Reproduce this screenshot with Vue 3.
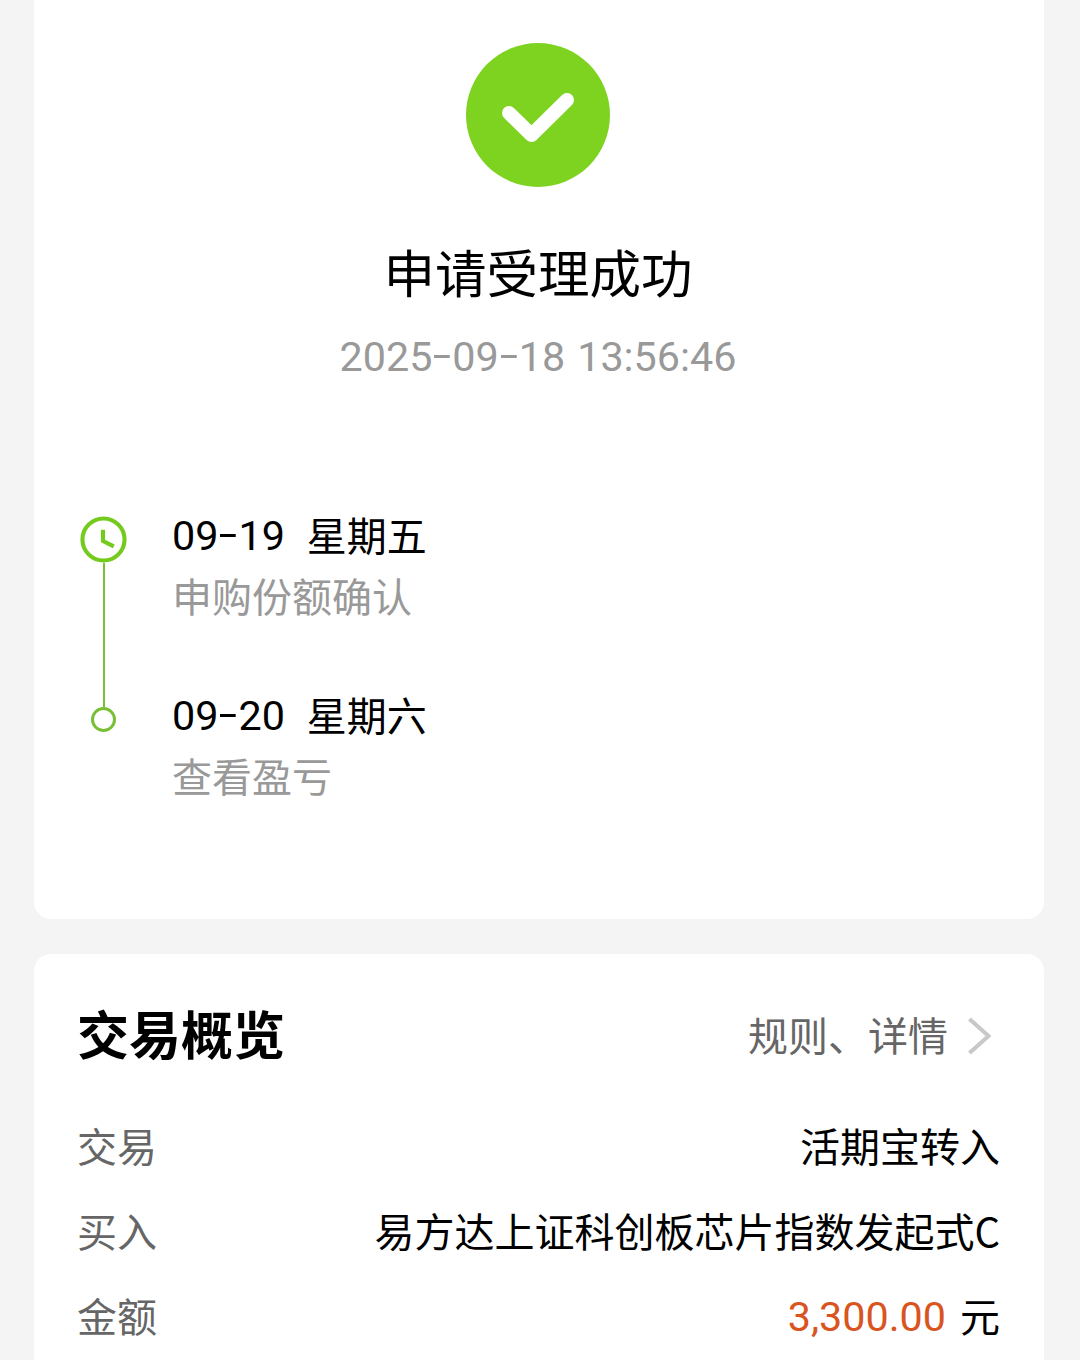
<script setup>
const time = { date: ['2025', '09', '18'], clock: '13:56:46' }

const steps = [
  { date: ['09', '19'], day: '星期五', text: '申购份额确认', active: true },
  { date: ['09', '20'], day: '星期六', text: '查看盈亏', active: false }
]
</script>

<template>
  <div class="page">
    <section class="card result">
      <svg class="success-icon" viewBox="0 0 144 144">
        <circle cx="72" cy="72" r="72" fill="#7ed321" />
        <path d="M43 70 L65.5 92 L101 57" fill="none" stroke="#fff" stroke-width="14" stroke-linecap="round" stroke-linejoin="round" />
      </svg>
      <h1 class="title">申请受理成功</h1>
      <div class="time">
        <span><template v-for="(part, i) in time.date" :key="i"><span v-if="i" class="dash">-</span>{{ part }}</template></span>
        <span>{{ time.clock }}</span>
      </div>
      <ul class="steps">
        <li v-for="step in steps" :key="step.day" class="step">
          <div class="marker">
            <svg v-if="step.active" class="clock" viewBox="0 0 48 48">
              <circle cx="24" cy="24" r="21.5" fill="none" stroke="#74ca1d" stroke-width="4.2" />
              <path d="M23.5 14 V25.5 L34.5 31" fill="none" stroke="#74ca1d" stroke-width="4.2" />
            </svg>
            <span v-if="step.active" class="line"></span>
            <span v-else class="dot"></span>
          </div>
          <div class="step-body">
            <div class="step-date">
              <span class="num"><template v-for="(part, i) in step.date" :key="i"><span v-if="i" class="dash">-</span>{{ part }}</template></span>
              <span class="day">{{ step.day }}</span>
            </div>
            <div class="step-text">{{ step.text }}</div>
          </div>
        </li>
      </ul>
    </section>

    <section class="card overview">
      <header class="head">
        <h2>交易概览</h2>
        <div class="more">
          <span>规则、详情</span>
          <svg class="arrow" viewBox="0 0 24 38">
            <path d="M1.5 2 L20.5 19 L1.5 36" fill="none" stroke="#c8c8c8" stroke-width="4" />
          </svg>
        </div>
      </header>
      <div class="row"><span class="label">交易</span><span>活期宝转入</span></div>
      <div class="row"><span class="label">买入</span><span>易方达上证科创板芯片指数发起式C</span></div>
      <div class="row"><span class="label">金额</span><span class="money"><em>3,300.00</em><span>元</span></span></div>
    </section>
  </div>
</template>

<style>
body {
  background: #f4f4f4;
}
</style>

<style scoped>
.page {
  height: 1360px;
  overflow: hidden;
  padding: 0 36px 0 34px;
  box-sizing: border-box;
  background: #f4f4f4;
  color: #000;
  font-family: 'Noto Sans CJK SC', sans-serif;
  font-size: 40px;
}

.card {
  background: #fff;
  box-sizing: border-box;
}

.result {
  height: 919px;
  padding: 43px 46px 0;
  border-radius: 0 0 17px 17px;
  display: flex;
  flex-direction: column;
  align-items: center;
}

.success-icon {
  width: 144px;
  height: 144px;
  margin-right: 2px;
}

.title {
  margin: 49px 2px 0 0;
  font-size: 51.5px;
  line-height: 70px;
  font-weight: 400;
}

.time {
  display: flex;
  gap: 12px;
  margin: 23px 2px 0 0;
  color: #999;
  font-family: Roboto, sans-serif;
  font-size: 41.3px;
  line-height: 56px;
}

/* wide dash between date parts */
.dash {
  display: inline-block;
  width: 20px;
  text-align: center;
  transform: translateY(-2px) scaleX(1.6);
}

.steps {
  align-self: stretch;
  list-style: none;
  margin: 122px 0 0;
  padding: 0;
}

.step {
  display: flex;
  height: 180px;
}

.marker {
  width: 47px;
  margin-right: 45px;
  padding-top: 9px;
  display: flex;
  flex-direction: column;
  align-items: center;
}

.clock {
  flex-shrink: 0;
  width: 47px;
  height: 47px;
}

.line {
  flex-shrink: 0;
  width: 2px;
  height: 145px;
  background: #78bf35;
}

.dot {
  width: 25px;
  height: 25px;
  margin-top: 11px;
  box-sizing: border-box;
  border: 3px solid #78bf35;
  border-radius: 50%;
}

.step-date {
  display: flex;
  gap: 22px;
  height: 56px;
  line-height: 56px;
}

.num {
  font-family: Roboto, sans-serif;
  font-size: 41.3px;
  line-height: 58px;
}

.day {
  line-height: 54px;
}

.step-text {
  color: #999;
  line-height: 64px;
}

.overview {
  height: 440px;
  margin-top: 35px;
  padding: 40px 44px 0;
  border-radius: 17px;
}

.head {
  display: flex;
  align-items: center;
  justify-content: space-between;
  height: 80px;
  margin-bottom: 29px;
}

.head h2 {
  margin: 0 0 2px -1px;
  font-size: 52px;
  line-height: 76px;
}

.more {
  display: flex;
  align-items: center;
  gap: 20px;
  margin-right: 8px;
  color: #666;
}

.arrow {
  width: 24px;
  height: 38px;
  margin-top: 4px;
}

.row {
  display: flex;
  justify-content: space-between;
  height: 85px;
  line-height: 85px;
}

.label {
  margin-left: -1px;
  color: #666;
}

.money {
  display: flex;
  gap: 14px;
}

.money em {
  color: #d9541e;
  font-family: Roboto, sans-serif;
  font-size: 41.3px;
  font-style: normal;
  line-height: 88px;
}
</style>
